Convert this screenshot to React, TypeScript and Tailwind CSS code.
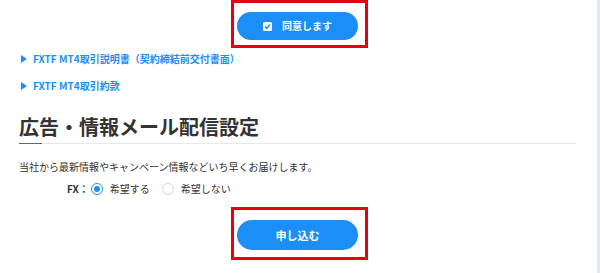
import React from "react";

const font = { fontFamily: '"Noto Sans CJK JP", "Noto Sans", sans-serif' };

function Triangle() {
  return (
    <svg width="6" height="8" viewBox="0 0 6 8" className="shrink-0">
      <path d="M0 0 L6 4 L0 8 Z" fill="#1b8ff5" />
    </svg>
  );
}

export default function App() {
  return (
    <div className="w-[600px] h-[273px] bg-white overflow-hidden flex" style={font}>
      <div className="flex-1 flex flex-col">
        <div className="ml-[231px] w-[137px] h-[48px] border-[3px] border-[#e50012] pt-[9px] pl-[3px]">
          <button className="w-[121px] h-[28px] rounded-full bg-[#1b8ff5] flex items-center justify-center gap-[10px] text-white font-bold text-[10px] leading-none">
            <span className="w-[9px] h-[9px] bg-white rounded-[1.5px] flex items-center justify-center">
              <svg width="7" height="7" viewBox="0 0 7 7">
                <path d="M1 3.6 L2.8 5.3 L6 1.6" stroke="#1b8ff5" strokeWidth="1.5" fill="none" />
              </svg>
            </span>
            <span>同意します</span>
          </button>
        </div>

        <div className="pl-[21px] mt-[4px] flex flex-col gap-[13px]">
          <div className="flex items-center gap-[6px] h-[14px] text-[10px] font-bold text-[#1b8ff5] leading-none">
            <Triangle />
            <span>FXTF MT4取引説明書（契約締結前交付書面）</span>
          </div>
          <div className="flex items-center gap-[6px] h-[14px] text-[10px] font-bold text-[#1b8ff5] leading-none">
            <Triangle />
            <span>FXTF MT4取引約款</span>
          </div>
        </div>

        <div className="ml-[19px] mr-[21px] mt-[22px] relative border-b border-[#e8e8e8] pb-[4px]">
          <h2 className="text-[20px] font-bold leading-[24px] text-[#333333]">広告・情報メール配信設定</h2>
          <div className="absolute left-0 bottom-[-1px] w-[23px] h-[1px] bg-[#666666]" />
        </div>

        <p className="ml-[19px] mt-[16px] text-[10px] leading-[14px] text-[#333333]">
          当社から最新情報やキャンペーン情報などいち早くお届けします。
        </p>

        <div className="ml-[67px] mt-[8px] h-[14px] flex items-center text-[10px] leading-none text-[#333333]">
          <span className="font-bold">FX：</span>
          <span className="ml-[2px] w-[12px] h-[12px] rounded-full border border-[#1b8ff5] flex items-center justify-center">
            <span className="w-[6px] h-[6px] rounded-full bg-[#1b8ff5]" />
          </span>
          <span className="ml-[7px]">希望する</span>
          <span className="ml-[12px] w-[12px] h-[12px] rounded-full border border-[#d4d4d4]" />
          <span className="ml-[7px]">希望しない</span>
        </div>

        <div className="ml-[231px] mt-[11px] w-[137px] h-[53px] border-[3px] border-[#e50012] pt-[10px] pl-[3px]">
          <button className="w-[121px] h-[30px] rounded-full bg-[#1b8ff5] flex items-center justify-center text-white font-bold text-[11px] leading-none">
            申し込む
          </button>
        </div>
      </div>
      <div className="w-[3px] h-full bg-[#e4e6f2]" />
    </div>
  );
}
